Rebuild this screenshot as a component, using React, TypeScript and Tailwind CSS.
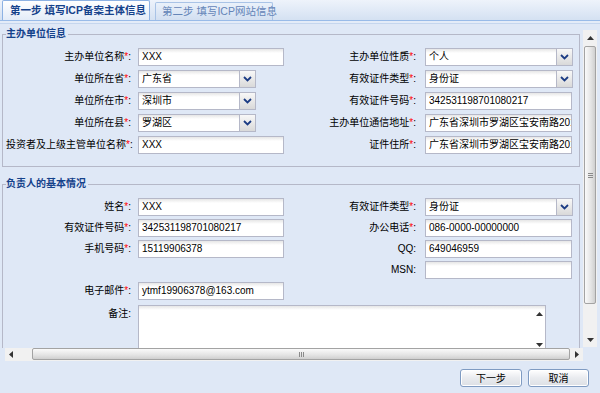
import React from "react";

const Req = () => <span className="text-[#ff0000]">*</span>;

function Label({ text, req, cls }: { text: string; req?: boolean; cls: string }) {
  return (
    <div className={`${cls} shrink-0 text-right leading-[18px] whitespace-nowrap`}>
      {text}
      {req && <Req />}:
    </div>
  );
}

function TextBox({ value, cls }: { value?: string; cls: string }) {
  return (
    <div
      className={`${cls} h-[18px] shrink-0 border border-[#b5b8c8] bg-[linear-gradient(to_bottom,#e6e6e6,#ffffff_4px)] pl-[3px] leading-[16px] whitespace-nowrap overflow-hidden`}
    >
      {value}
    </div>
  );
}

function Trigger() {
  return (
    <div className="w-[16px] h-[18px] shrink-0 border border-[#b5b8c8] border-l-0 bg-[linear-gradient(to_bottom,#f8f8f8,#d9d9d9)] flex items-center justify-center">
      <svg width="9" height="6" viewBox="0 0 9 6">
        <polyline points="1,1 4.5,4.5 8,1" fill="none" stroke="#1c3c84" strokeWidth="1.8" />
      </svg>
    </div>
  );
}

function Combo({ value, cls }: { value: string; cls: string }) {
  return (
    <div className="flex shrink-0">
      <TextBox value={value} cls={cls} />
      <Trigger />
    </div>
  );
}

function Legend({ text }: { text: string }) {
  return (
    <legend className="pr-[2px] text-[#15428b] font-bold leading-[12px] text-[10px]">{text}</legend>
  );
}

function LRow({ children }: { children: React.ReactNode }) {
  return <div className="flex items-center h-[18px]">{children}</div>;
}

function Arrow({ dir }: { dir: "up" | "down" | "left" | "right" }) {
  const pts =
    dir === "up" ? "0,4 3.5,0 7,4" : dir === "down" ? "0,0 3.5,4 7,0" : dir === "left" ? "4,0 0,3.5 4,7" : "0,0 4,3.5 0,7";
  const w = dir === "up" || dir === "down" ? 7 : 4;
  const h = dir === "up" || dir === "down" ? 4 : 7;
  return (
    <svg width={w} height={h} viewBox={`0 0 ${w} ${h}`}>
      <polygon points={pts} fill="#333" />
    </svg>
  );
}

export default function App() {
  return (
    <div className="w-[600px] h-[393px] flex flex-col bg-[#dfe8f6] overflow-hidden text-[10px] text-black font-['Liberation_Sans','Noto_Sans_CJK_SC',sans-serif]">
      {/* tab strip */}
      <div className="h-[24px] shrink-0 flex flex-col">
        <div className="h-[21px] flex items-end pl-[2px] gap-[5px] bg-[linear-gradient(to_bottom,#eef3fb,#d4e1f2)] border-b border-[#99bbe8]">
          <div className="w-[148px] h-[20px] border border-b-0 border-[#8db2e3] rounded-t-[2px] bg-[linear-gradient(to_bottom,#ffffff,#e3ecf8)] flex items-center pl-[7px] text-[#15428b] font-bold text-[10.5px] whitespace-nowrap">
            第一步 填写ICP备案主体信息
          </div>
          <div className="w-[118px] h-[18px] border border-b-0 border-[#a9c3e6] rounded-t-[2px] bg-[linear-gradient(to_bottom,#eaf1fa,#d2dff1)] flex items-center pl-[6px] text-[#6585b8] text-[10.5px] whitespace-nowrap">
            第二步 填写ICP网站信息
          </div>
        </div>
        <div className="h-[3px] bg-[#e4ecf8] border-b border-[#c5d6ee]" />
      </div>

      {/* middle */}
      <div className="h-[337px] shrink-0 flex">
        <div className="w-[583px] shrink-0 flex flex-col">
          <div className="h-[324px] shrink-0 overflow-hidden pt-[4px]">
            {/* fieldset 1 */}
            <fieldset className="ml-[2px] w-[578px] border border-[#b5b8c8] pl-[3px]">
              <Legend text="主办单位信息" />
              <div className="flex pt-[8px] pb-[12px]">
                <div className="w-[294px] shrink-0 flex flex-col gap-[4px]">
                  <LRow>
                    <Label cls="w-[125px]" text="主办单位名称" req />
                    <div className="ml-[7px]"><TextBox cls="w-[146px]" value="XXX" /></div>
                  </LRow>
                  <LRow>
                    <Label cls="w-[125px]" text="单位所在省" req />
                    <div className="ml-[7px]"><Combo cls="w-[102px]" value="广东省" /></div>
                  </LRow>
                  <LRow>
                    <Label cls="w-[125px]" text="单位所在市" req />
                    <div className="ml-[7px]"><Combo cls="w-[102px]" value="深圳市" /></div>
                  </LRow>
                  <LRow>
                    <Label cls="w-[125px]" text="单位所在县" req />
                    <div className="ml-[7px]"><Combo cls="w-[102px]" value="罗湖区" /></div>
                  </LRow>
                  <LRow>
                    <Label cls="w-[125px]" text="投资者及上级主管单位名称" req />
                    <div className="ml-[7px]"><TextBox cls="w-[146px]" value="XXX" /></div>
                  </LRow>
                </div>
                <div className="flex flex-col gap-[4px]">
                  <LRow>
                    <Label cls="w-[116px]" text="主办单位性质" req />
                    <div className="ml-[9px]"><Combo cls="w-[132px]" value="个人" /></div>
                  </LRow>
                  <LRow>
                    <Label cls="w-[116px]" text="有效证件类型" req />
                    <div className="ml-[9px]"><Combo cls="w-[132px]" value="身份证" /></div>
                  </LRow>
                  <LRow>
                    <Label cls="w-[116px]" text="有效证件号码" req />
                    <div className="ml-[9px]"><TextBox cls="w-[147px]" value="342531198701080217" /></div>
                  </LRow>
                  <LRow>
                    <Label cls="w-[116px]" text="主办单位通信地址" req />
                    <div className="ml-[9px]"><TextBox cls="w-[147px]" value="广东省深圳市罗湖区宝安南路2014号" /></div>
                  </LRow>
                  <LRow>
                    <Label cls="w-[116px]" text="证件住所" req />
                    <div className="ml-[9px]"><TextBox cls="w-[147px]" value="广东省深圳市罗湖区宝安南路2014号" /></div>
                  </LRow>
                </div>
              </div>
            </fieldset>

            {/* fieldset 2 */}
            <fieldset className="mt-[11px] ml-[2px] w-[578px] border border-[#b5b8c8] pl-[3px]">
              <Legend text="负责人的基本情况" />
              <div className="pt-[8px] pb-[20px]">
                <div className="flex">
                  <div className="w-[294px] shrink-0 flex flex-col gap-[3px]">
                    <LRow>
                      <Label cls="w-[125px]" text="姓名" req />
                      <div className="ml-[7px]"><TextBox cls="w-[146px]" value="XXX" /></div>
                    </LRow>
                    <LRow>
                      <Label cls="w-[125px]" text="有效证件号码" req />
                      <div className="ml-[7px]"><TextBox cls="w-[146px]" value="342531198701080217" /></div>
                    </LRow>
                    <LRow>
                      <Label cls="w-[125px]" text="手机号码" req />
                      <div className="ml-[7px]"><TextBox cls="w-[146px]" value="15119906378" /></div>
                    </LRow>
                  </div>
                  <div className="flex flex-col gap-[3px]">
                    <LRow>
                      <Label cls="w-[116px]" text="有效证件类型" req />
                      <div className="ml-[9px]"><Combo cls="w-[132px]" value="身份证" /></div>
                    </LRow>
                    <LRow>
                      <Label cls="w-[116px]" text="办公电话" req />
                      <div className="ml-[9px]"><TextBox cls="w-[147px]" value="086-0000-00000000" /></div>
                    </LRow>
                    <LRow>
                      <Label cls="w-[116px]" text="QQ" />
                      <div className="ml-[9px]"><TextBox cls="w-[147px]" value="649046959" /></div>
                    </LRow>
                    <LRow>
                      <Label cls="w-[116px]" text="MSN" />
                      <div className="ml-[9px]"><TextBox cls="w-[147px]" value="" /></div>
                    </LRow>
                  </div>
                </div>
                <div className="mt-[3px]">
                  <LRow>
                    <Label cls="w-[125px]" text="电子邮件" req />
                    <div className="ml-[7px]"><TextBox cls="w-[146px]" value="ytmf19906378@163.com" /></div>
                  </LRow>
                </div>
                <div className="mt-[5px] flex items-start">
                  <Label cls="w-[125px]" text="备注" />
                  <div className="ml-[7px] w-[408px] h-[46px] shrink-0 border border-[#b5b8c8] bg-[linear-gradient(to_bottom,#e6e6e6,#ffffff_4px)] flex justify-end">
                    <div className="w-[11px] flex flex-col items-center justify-between pt-[6px] pb-[3px]">
                      <Arrow dir="up" />
                      <Arrow dir="down" />
                    </div>
                  </div>
                </div>
              </div>
            </fieldset>
          </div>

          {/* horizontal scrollbar */}
          <div className="ml-[5px] w-[578px] h-[13px] shrink-0 flex bg-[#f1f1f1]">
            <div className="w-[27px] shrink-0 flex items-center pl-[4px]">
              <Arrow dir="left" />
            </div>
            <div className="w-[538px] shrink-0 h-[12px] rounded-[2px] border border-[#a3a3a3] bg-[linear-gradient(to_bottom,#fafafa,#e4e4e4_60%,#cfcfcf)] flex items-center justify-center">
              <div className="flex gap-[1px]">
                <div className="w-[1px] h-[5px] bg-[#8a8a8a]" />
                <div className="w-[1px] h-[5px] bg-[#8a8a8a]" />
                <div className="w-[1px] h-[5px] bg-[#8a8a8a]" />
              </div>
            </div>
            <div className="flex-1 flex items-center justify-center">
              <Arrow dir="right" />
            </div>
          </div>
        </div>

        {/* vertical scrollbar */}
        <div className="w-[14px] shrink-0 pt-[6px]">
          <div className="h-[317px] bg-[#f1f1f1] flex flex-col">
            <div className="h-[16px] shrink-0 flex items-center justify-center">
              <Arrow dir="up" />
            </div>
            <div className="h-[258px] shrink-0 mx-[1px] rounded-[2px] border border-[#a3a3a3] bg-[linear-gradient(to_right,#fafafa,#e4e4e4_60%,#cfcfcf)] flex items-center justify-center">
              <div className="flex flex-col gap-[1px]">
                <div className="w-[5px] h-[1px] bg-[#8a8a8a]" />
                <div className="w-[5px] h-[1px] bg-[#8a8a8a]" />
                <div className="w-[5px] h-[1px] bg-[#8a8a8a]" />
              </div>
            </div>
            <div className="flex-1" />
            <div className="h-[14px] shrink-0 flex items-center justify-center">
              <Arrow dir="down" />
            </div>
          </div>
        </div>
      </div>

      {/* footer */}
      <div className="flex-1 flex justify-end items-start pt-[8px] pr-[11px] gap-[6px]">
        <div className="w-[62px] h-[18px] rounded-[3px] border border-[#7f9bc2] bg-[linear-gradient(to_bottom,#ffffff,#e9ebef_50%,#dcdfe5)] shadow-[inset_0_0_0_1px_#ffffff] flex items-center justify-center text-[10px]">
          下一步
        </div>
        <div className="w-[61px] h-[18px] rounded-[3px] border border-[#7f9bc2] bg-[linear-gradient(to_bottom,#ffffff,#e9ebef_50%,#dcdfe5)] shadow-[inset_0_0_0_1px_#ffffff] flex items-center justify-center text-[10px]">
          取消
        </div>
      </div>
    </div>
  );
}
